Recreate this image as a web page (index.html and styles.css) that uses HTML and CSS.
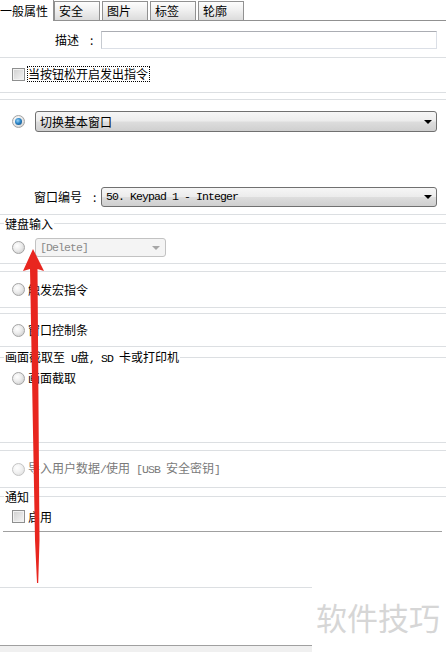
FILE: index.html
```html
<!DOCTYPE html>
<html lang="zh">
<head>
<meta charset="utf-8">
<title>属性</title>
<link rel="stylesheet" href="styles.css">
</head>
<body>
<div class="page">
  <div class="tabs">
    <div class="tab active">一般属性</div>
    <div class="tab">安全</div>
    <div class="tab">图片</div>
    <div class="tab">标签</div>
    <div class="tab">轮廓</div>
  </div>

  <div class="desc">
    <span class="lbl">描述<span class="colon">:</span></span>
    <div class="input"></div>
  </div>

  <div class="check-sec">
    <div class="line-row">
      <span class="checkbox"></span><span class="focus">当按钮松开启发出指令</span>
    </div>
  </div>

  <div class="gap6"></div>

  <div class="box win">
    <div class="line-row first">
      <span class="radio on"></span>
      <div class="select wide"><span>切换基本窗口</span><i class="arr"></i></div>
    </div>
    <div class="line-row winno">
      <span class="lbl2">窗口编号<span class="colon">:</span></span>
      <div class="select mid"><span class="mono">50. Keypad 1 - Integer</span><i class="arr"></i></div>
    </div>
  </div>

  <div class="group kbd">
    <div class="legend"><span>键盘输入</span></div>
    <div class="line-row sel-row">
      <span class="radio"></span>
      <div class="select small disabled"><span class="mono">[Delete]</span><i class="arr"></i></div>
    </div>
  </div>

  <div class="gap7"></div>
  <div class="box macro">
    <div class="line-row"><span class="radio"></span><span>触发宏指令</span></div>
  </div>

  <div class="gap5"></div>
  <div class="box ctrl">
    <div class="line-row"><span class="radio"></span><span>窗口控制条</span></div>
  </div>

  <div class="group shot">
    <div class="legend"><span>画面截取至<span class="mono"> U</span>盘<span class="mono">, SD </span>卡或打印机</span></div>
    <div class="line-row item"><span class="radio"></span><span>画面截取</span></div>
  </div>

  <div class="gap7"></div>
  <div class="box usb">
    <div class="line-row dim"><span class="radio"></span><span>导入用户数据<span class="mono">/</span>使用<span class="mono"> [USB </span>安全密钥<span class="mono">]</span></span></div>
  </div>

  <div class="group notify">
    <div class="legend"><span>通知</span></div>
    <div class="line-row item"><span class="checkbox"></span><span>启用</span></div>
  </div>
  <div class="sep-dark"></div>

  <div class="blank1"></div>
  <div class="blank2"></div>
  <div class="foot"></div>

  <div class="watermark">软件技巧</div>

  <svg class="arrow" width="446" height="652" viewBox="0 0 446 652">
    <path d="M33 249 L44 271 L37.5 269 L39.5 540 L38.2 583 L37 583 L35 540 L30 269 L23 271 Z" fill="#e8261f"/>
  </svg>
</div>
</body>
</html>
```

FILE: styles.css
```css
* { box-sizing: border-box; }

html, body {
  margin: 0;
  padding: 0;
  background: #ffffff;
}

body {
  font: 12px/16px "Noto Sans CJK SC", "Liberation Sans", sans-serif;
  color: #000;
}

.page {
  position: relative;
  width: 446px;
  height: 652px;
  overflow: hidden;
  background: #fff;
}

.mono {
  font-family: "Liberation Mono", "DejaVu Sans Mono", monospace;
  font-size: 11.5px;
  letter-spacing: -0.9px;
  white-space: pre;
}

/* tabs */
.tabs {
  display: flex;
  align-items: flex-end;
  height: 21px;
  border-bottom: 1px solid #919191;
}

.tab {
  width: 46px;
  height: 19px;
  margin-right: 2px;
  padding-left: 4px;
  border: 1px solid #919191;
  border-bottom: none;
  background: linear-gradient(#fdfdfd, #f0f0f0 45%, #dcdcdc);
  line-height: 18px;
  white-space: nowrap;
}

.tab.active {
  width: 54px;
  height: 21px;
  margin-bottom: -1px;
  margin-right: 0;
  padding-left: 0;
  border: none;
  border-right: 1px solid #919191;
  background: #fff;
  line-height: 21px;
}

/* description */
.desc {
  display: flex;
  align-items: flex-start;
  height: 37px;
  padding-top: 10px;
  border-bottom: 1px solid #dcdfe2;
}

.lbl {
  width: 101px;
  padding-left: 55px;
  line-height: 18px;
  white-space: nowrap;
}

.colon {
  margin-left: 11px;
}

.input {
  width: 336px;
  height: 18px;
  border: 1px solid #dbdfe6;
  border-top-color: #abadb3;
  border-left-color: #c6cad0;
  background: #fff;
}

/* rows */
.line-row {
  display: flex;
  align-items: center;
  padding-left: 12px;
  white-space: nowrap;
}

.check-sec {
  height: 35px;
  padding-top: 8px;
  border-bottom: 1px solid #dcdfe2;
}

.check-sec .line-row {
  height: 16px;
}

.checkbox {
  width: 13px;
  height: 13px;
  flex: none;
  margin-right: 2px;
  border: 1px solid #8e8f8f;
  background: linear-gradient(135deg, #cfcfcf, #f6f6f6);
  box-shadow: inset 0 0 0 1px #f2f2f2;
}

.focus {
  height: 16px;
  padding: 0 1px 0 0;
  border: 1px dotted #000;
  line-height: 14px;
}

.radio {
  position: relative;
  width: 13px;
  height: 13px;
  flex: none;
  margin-right: 3px;
  border-radius: 50%;
  border: 1px solid #a4a4a4;
  background: radial-gradient(circle at 38% 35%, #ffffff 0, #ececec 45%, #c4c4c4 100%);
}

.radio.on::after {
  content: "";
  position: absolute;
  left: 2px;
  top: 2px;
  width: 7px;
  height: 7px;
  border-radius: 50%;
  background: radial-gradient(circle at 40% 38%, #9bd3f5 0, #2d86c8 45%, #0b3f6e 100%);
}

.gap5 { height: 5px; }
.gap6 { height: 6px; }
.gap7 { height: 7px; }

.box {
  border-top: 1px solid #dcdfe2;
  border-bottom: 1px solid #dcdfe2;
}

/* select boxes */
.select {
  display: flex;
  align-items: center;
  padding-left: 4px;
  border: 1px solid #707070;
  border-radius: 3px;
  background: linear-gradient(#f6f6f6, #ececec 48%, #dddddd 52%, #cfcfcf);
}

.select .arr {
  margin-left: auto;
  margin-right: 4px;
  width: 0;
  height: 0;
  border-left: 4px solid transparent;
  border-right: 4px solid transparent;
  border-top: 4px solid #000;
}

.win {
  height: 116px;
  padding-top: 11px;
}

.win .first {
  height: 21px;
}

.select.wide {
  margin-left: 7px;
  width: 402px;
  height: 21px;
  line-height: 19px;
}

.win .winno {
  margin-top: 55px;
  padding-left: 0;
  height: 20px;
}

.lbl2 {
  width: 101px;
  padding-left: 34px;
}

.select.mid {
  width: 336px;
  height: 20px;
}

.select.small {
  margin-left: 7px;
  width: 131px;
  height: 19px;
}

.select.disabled {
  border-color: #c2c2c2;
  background: #f4f4f4;
  color: #8a8a8a;
}

.select.disabled .arr {
  border-top-color: #a6a6a6;
  margin-right: 5px;
}

/* groups */
.group {
  border-bottom: 1px solid #dcdfe2;
}

.legend {
  display: flex;
  align-items: center;
  height: 17px;
  white-space: nowrap;
}

.legend::before {
  content: "";
  width: 4px;
  height: 1px;
  background: #dcdfe2;
}

.legend::after {
  content: "";
  flex: 1;
  height: 1px;
  background: #dcdfe2;
}

.legend > span {
  padding: 0 1px;
}

.kbd {
  height: 49px;
}

.kbd .sel-row {
  margin-top: 6px;
  height: 19px;
}

.macro {
  height: 37px;
}

.macro .line-row {
  height: 35px;
}

.ctrl {
  height: 34px;
}

.ctrl .line-row {
  height: 32px;
}

.shot {
  height: 96px;
  padding-top: 2px;
}

.shot .item {
  margin-top: 4px;
  height: 16px;
}

.usb {
  height: 38px;
}

.usb .line-row {
  height: 36px;
}

.dim {
  color: #7a7a7a;
}

.dim .radio {
  border-color: #c4c4c4;
  background: radial-gradient(circle at 38% 35%, #ffffff 0, #f2f2f2 45%, #dadada 100%);
}

.notify {
  height: 43px;
  border-bottom: none;
}

.notify .item {
  margin-top: 4px;
  height: 15px;
}

.notify .checkbox {
  margin-right: 3px;
}

.sep-dark {
  height: 1px;
  margin: 0 4px 0 3px;
  background: #a0a0a0;
}

.blank1 {
  width: 312px;
  height: 56px;
  border-bottom: 1px solid #dcdfe2;
}

.blank2 {
  width: 312px;
  height: 58px;
  border-bottom: 1px solid #a0a0a0;
}

.foot {
  width: 312px;
  height: 6px;
  background: #f0f0f0;
}

.watermark {
  position: absolute;
  left: 316px;
  top: 596px;
  font-size: 31px;
  line-height: 42px;
  color: #d6d6d6;
  white-space: nowrap;
}

.arrow {
  position: absolute;
  left: 0;
  top: 0;
  pointer-events: none;
}
```
